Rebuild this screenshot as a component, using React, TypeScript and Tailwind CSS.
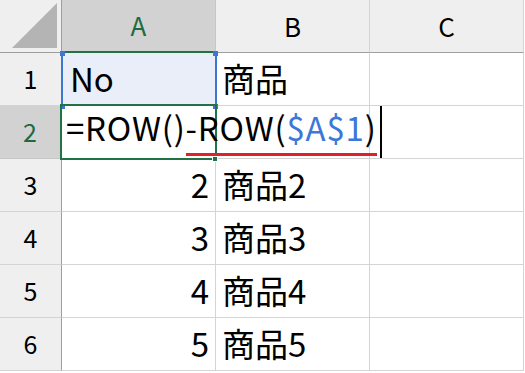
import React from "react";

const font = {
  fontFamily: '"Noto Sans CJK JP", "Noto Sans", sans-serif',
};

const rows = [
  { n: "1", a: "No", b: "商品" },
  { n: "2", a: "", b: "" },
  { n: "3", a: "2", b: "商品2" },
  { n: "4", a: "3", b: "商品3" },
  { n: "5", a: "4", b: "商品4" },
  { n: "6", a: "5", b: "商品5" },
];

const handle = "absolute w-[5px] h-[5px] bg-[#3b78d0]";

export default function App() {
  return (
    <div className="relative w-[525px] h-[373px] bg-white overflow-hidden text-black" style={font}>
      <div className="grid grid-cols-[62px_154px_154px_154px] grid-rows-[53px_repeat(6,53px)]">
        {/* corner */}
        <div className="relative bg-[#efefef] border-r border-b border-[#9e9e9e]">
          <div
            className="absolute right-[4px] bottom-[4px] w-[45px] h-[45px] bg-[#b4b4b4]"
            style={{ clipPath: "polygon(100% 0, 100% 100%, 0 100%)" }}
          />
        </div>
        <div className="flex items-center justify-center pb-[2px] bg-[#d2d2d2] border-r border-[#c6c6c6] border-b-2 border-b-[#217346] text-[26px] text-[#1e6b41]">
          A
        </div>
        <div className="flex items-center justify-center pb-[2px] bg-[#efefef] border-r border-[#d4d4d4] border-b border-b-[#9e9e9e] text-[26px]">
          B
        </div>
        <div className="flex items-center justify-center pb-[2px] bg-[#efefef] border-r border-[#d4d4d4] border-b border-b-[#9e9e9e] text-[26px]">
          C
        </div>

        {rows.map((r) => {
          const sel = r.n === "2";
          return (
            <React.Fragment key={r.n}>
              <div
                className={
                  sel
                    ? "flex items-center justify-center bg-[#d2d2d2] border-r-2 border-r-[#217346] border-b border-b-[#c6c6c6] text-[25px] text-[#1e6b41]"
                    : "flex items-center justify-center bg-[#efefef] border-r border-r-[#9e9e9e] border-b border-b-[#d4d4d4] text-[25px]"
                }
              >
                {r.n}
              </div>
              <div
                className={
                  r.n === "1"
                    ? "flex items-center pl-[8px] bg-[#e9eef8] border-r border-b border-[#d4d4d4] text-[33px]"
                    : "flex items-center justify-end pr-[6px] border-r border-b border-[#d4d4d4] text-[33px]"
                }
              >
                {r.a}
              </div>
              <div className="flex items-center pl-[6px] border-r border-b border-[#d4d4d4] text-[33px]">{r.b}</div>
              <div className="border-r border-b border-[#d4d4d4]" />
            </React.Fragment>
          );
        })}
      </div>

      {/* A1 reference range highlight */}
      <div className="absolute left-[61px] top-[52px] w-[156px] h-[54px] border-x-2 border-[#3b78d0] pointer-events-none">
        <div className={`${handle} -left-[3px] -top-[1px]`} />
        <div className={`${handle} -right-[3px] -top-[1px]`} />
        <div className={`${handle} -left-[3px] -bottom-[3px]`} />
        <div className={`${handle} -right-[3px] -bottom-[3px]`} />
      </div>

      {/* A2 active cell in edit mode */}
      <div className="absolute left-[60px] top-[104px] w-[157px] h-[56px] border-2 border-[#217346]">
        <div className="absolute -right-[3px] -bottom-[4px] w-[6px] h-[6px] bg-[#217346] border border-white" />
      </div>
      <div className="absolute left-[66px] top-[105px] h-[53px] flex items-start pt-[6px] text-[33px] leading-none whitespace-nowrap tracking-[0.8px]">
        <span>=ROW()</span>
        <span className="flex flex-col">
          <span>
            -ROW(<span className="text-[#3c78d8]">$A$1</span>)
          </span>
          <span className="mt-[9px] h-[3px] bg-[#e0202a]" />
        </span>
        <span className="ml-[3px] -mt-[5px] w-[2px] h-[52px] bg-black" />
      </div>
    </div>
  );
}
